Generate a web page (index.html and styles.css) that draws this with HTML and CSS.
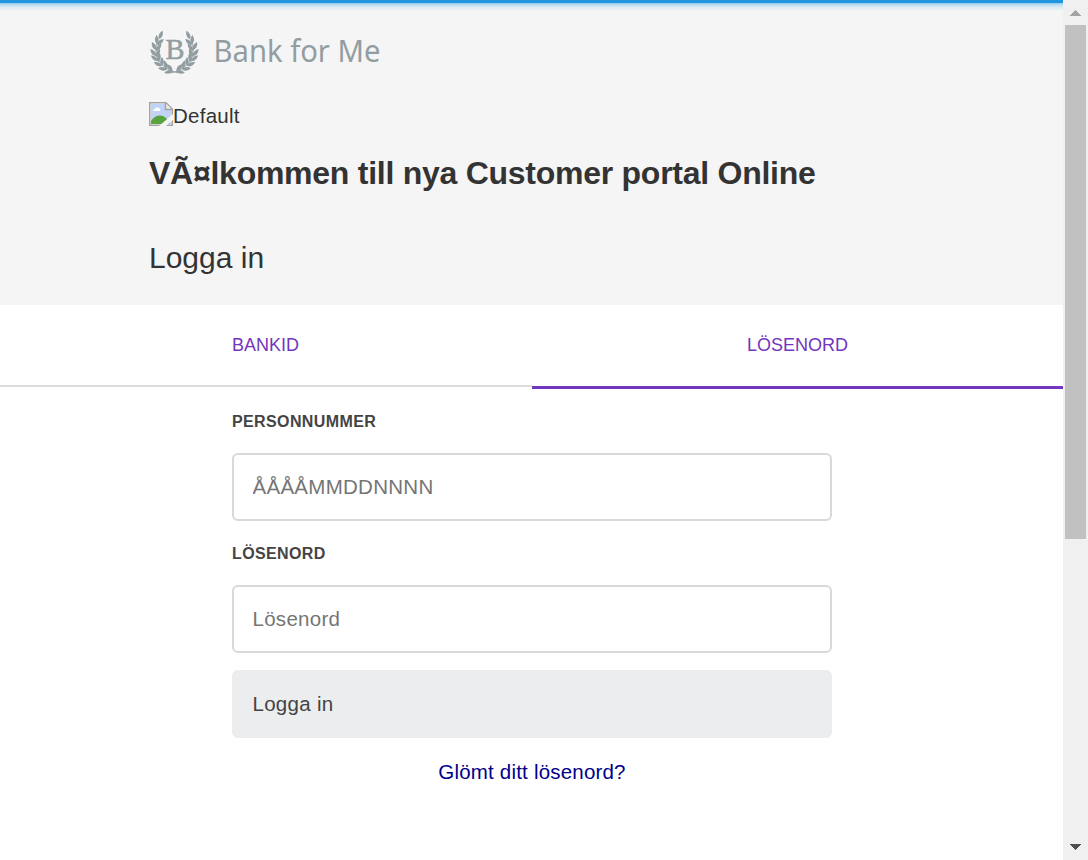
FILE: index.html
```html
<!DOCTYPE html>
<html lang="sv">
<head>
<meta charset="utf-8">
<title>Logga in</title>
<link rel="stylesheet" href="styles.css">
</head>
<body>
<div class="window">
  <div class="page">
    <header class="header">
      <svg class="logo" viewBox="0 0 240 50" width="240" height="50">
        <defs>
          <path id="leaf" d="M0 0C-2.6-2.5-2.2-6 0-9C2.2-6 2.6-2.5 0 0Z"/>
          <g id="branch">
            <path d="M28 43Q15 40 9 31Q3 21 8 9" fill="none" stroke="#929da1" stroke-width=".9"/>
            <use href="#leaf" transform="translate(9 9) rotate(24)"/>
            <use href="#leaf" transform="translate(7 14) rotate(-3)"/>
            <use href="#leaf" transform="translate(7 15) rotate(48)"/>
            <use href="#leaf" transform="translate(6 20) rotate(-27)"/>
            <use href="#leaf" transform="translate(6 21) rotate(36)"/>
            <use href="#leaf" transform="translate(6 26) rotate(-39)"/>
            <use href="#leaf" transform="translate(6 27) rotate(26)"/>
            <use href="#leaf" transform="translate(8 31) rotate(-52)"/>
            <use href="#leaf" transform="translate(8 32) rotate(12)"/>
            <use href="#leaf" transform="translate(12 36) rotate(-66)"/>
            <use href="#leaf" transform="translate(12 36) rotate(0)"/>
            <use href="#leaf" transform="translate(17 39.5) rotate(-82)"/>
            <use href="#leaf" transform="translate(17 39) rotate(-18)"/>
            <use href="#leaf" transform="translate(23 41) rotate(-102)"/>
            <use href="#leaf" transform="translate(22.5 41) rotate(-40)"/>
          </g>
        </defs>
        <g fill="#929da1">
          <use href="#branch"/>
          <use href="#branch" transform="translate(49 0) scale(-1 1)"/>
          <text class="crest" x="15.5" y="29" textLength="19" lengthAdjust="spacingAndGlyphs">B</text>
          <text class="wordmark" x="63.5" y="32" textLength="167" lengthAdjust="spacingAndGlyphs">Bank for Me</text>
        </g>
      </svg>
      <div class="default">
        <svg width="24" height="24" viewBox="0 0 24 24">
          <path d="M.75.75H17L23.25 7V23.25H.75Z" fill="#fff" stroke="#a2a2a2" stroke-width="1.5"/>
          <path d="M2 2H16V8H22V22H2Z" fill="#c1d3f6"/>
          <path d="M4 9Q4 7 6 7Q7 4 9 6Q12 6 11 9Z" fill="#fff"/>
          <path d="M2 22V19Q9 10 17 16L21 22Z" fill="#56a43b"/>
          <path d="M16.5 1V7.5H23" fill="#eee" stroke="#a2a2a2" stroke-width="1.5"/>
          <path d="M10 24L24 12V18L17 24Z" fill="#f5f5f5"/>
        </svg><span>Default</span>
      </div>
      <h1 class="title">VÃ¤lkommen till nya Customer portal Online</h1>
      <h2 class="subtitle">Logga in</h2>
    </header>
    <nav class="tabs">
      <a class="tab">BANKID</a>
      <a class="tab tab-active">LÖSENORD</a>
    </nav>
    <form class="form">
      <label class="label" for="pnr">PERSONNUMMER</label>
      <input class="field" id="pnr" type="text" placeholder="ÅÅÅÅMMDDNNNN">
      <label class="label" for="pwd">LÖSENORD</label>
      <input class="field" id="pwd" type="password" placeholder="Lösenord">
      <button class="submit" type="button">Logga in</button>
      <a class="forgot">Glömt ditt lösenord?</a>
    </form>
  </div>
  <div class="scrollbar">
    <svg class="arrow" width="25" height="25" shape-rendering="crispEdges"><path d="M7 16L12.5 10L18 16Z" fill="#a3a3a3"/></svg>
    <div class="thumb"></div>
    <svg class="arrow" width="25" height="25" shape-rendering="crispEdges"><path d="M7 9L12.5 15L18 9Z" fill="#505050"/></svg>
  </div>
</div>
</body>
</html>
```
FILE: styles.css
```css
* { box-sizing: border-box; }
body {
  margin: 0;
  background: #fff;
  color: #333;
  font-family: "Liberation Sans", Arial, sans-serif;
}
.window { display: flex; height: 860px; overflow: hidden; }
.page { width: 1063px; overflow: hidden; }
.header {
  height: 305px;
  padding: 27px 0 0 149px;
  border-top: 3px solid #2196df;
  background: linear-gradient(#8fcbef, #cfe6f4 3px, #f5f5f5 8px);
}
.logo { display: block; margin-left: 1px; overflow: visible; }
.crest { font: 29px "Liberation Serif", serif; stroke: #929da1; stroke-width: .5px; }
.wordmark { font: 31px "Noto Sans", sans-serif; }
.default {
  display: flex;
  height: 24px;
  margin-top: 22px;
  font-size: 20.5px;
  letter-spacing: .25px;
  line-height: 27px;
}
.title {
  margin: 28px 0 0;
  font-size: 32px;
  letter-spacing: -.26px;
  line-height: 38px;
  white-space: nowrap;
}
.subtitle { margin: 49px 0 0; font-size: 30px; font-weight: 400; line-height: 34px; }
.tabs { display: grid; grid-template-columns: 532px 531px; align-items: start; height: 84px; }
.tab {
  height: 82px;
  padding-left: 232px;
  border-bottom: 2px solid #dcdcdc;
  color: #7336be;
  font-size: 18px;
  line-height: 80px;
}
.tab-active { height: 84px; padding-left: 215px; border-bottom: 3px solid #7336be; }
.form { display: flex; flex-direction: column; width: 600px; margin-left: 232px; }
.label {
  height: 64px;
  color: #444;
  font-size: 16px;
  font-weight: 700;
  letter-spacing: .38px;
  line-height: 65px;
}
.field, .submit {
  width: 600px;
  height: 68px;
  padding: 0 18.5px;
  border: 2px solid #d9d9d9;
  border-radius: 6px;
  background: #fff;
  font: 20.5px "Liberation Sans", Arial, sans-serif;
  letter-spacing: .28px;
}
.field::placeholder { color: #757575; }
.submit {
  margin-top: 17px;
  border-color: #ecedef;
  background: #ecedef;
  color: #444;
  text-align: left;
}
.forgot {
  margin-top: 22px;
  color: #00008b;
  font-size: 20.5px;
  letter-spacing: .2px;
  line-height: 24px;
  text-align: center;
}
.scrollbar { display: flex; flex-direction: column; width: 25px; background: #f0f0f0; }
.arrow { display: block; }
.thumb { height: 514px; margin: 0 2px auto; background: #c1c1c1; }
```
